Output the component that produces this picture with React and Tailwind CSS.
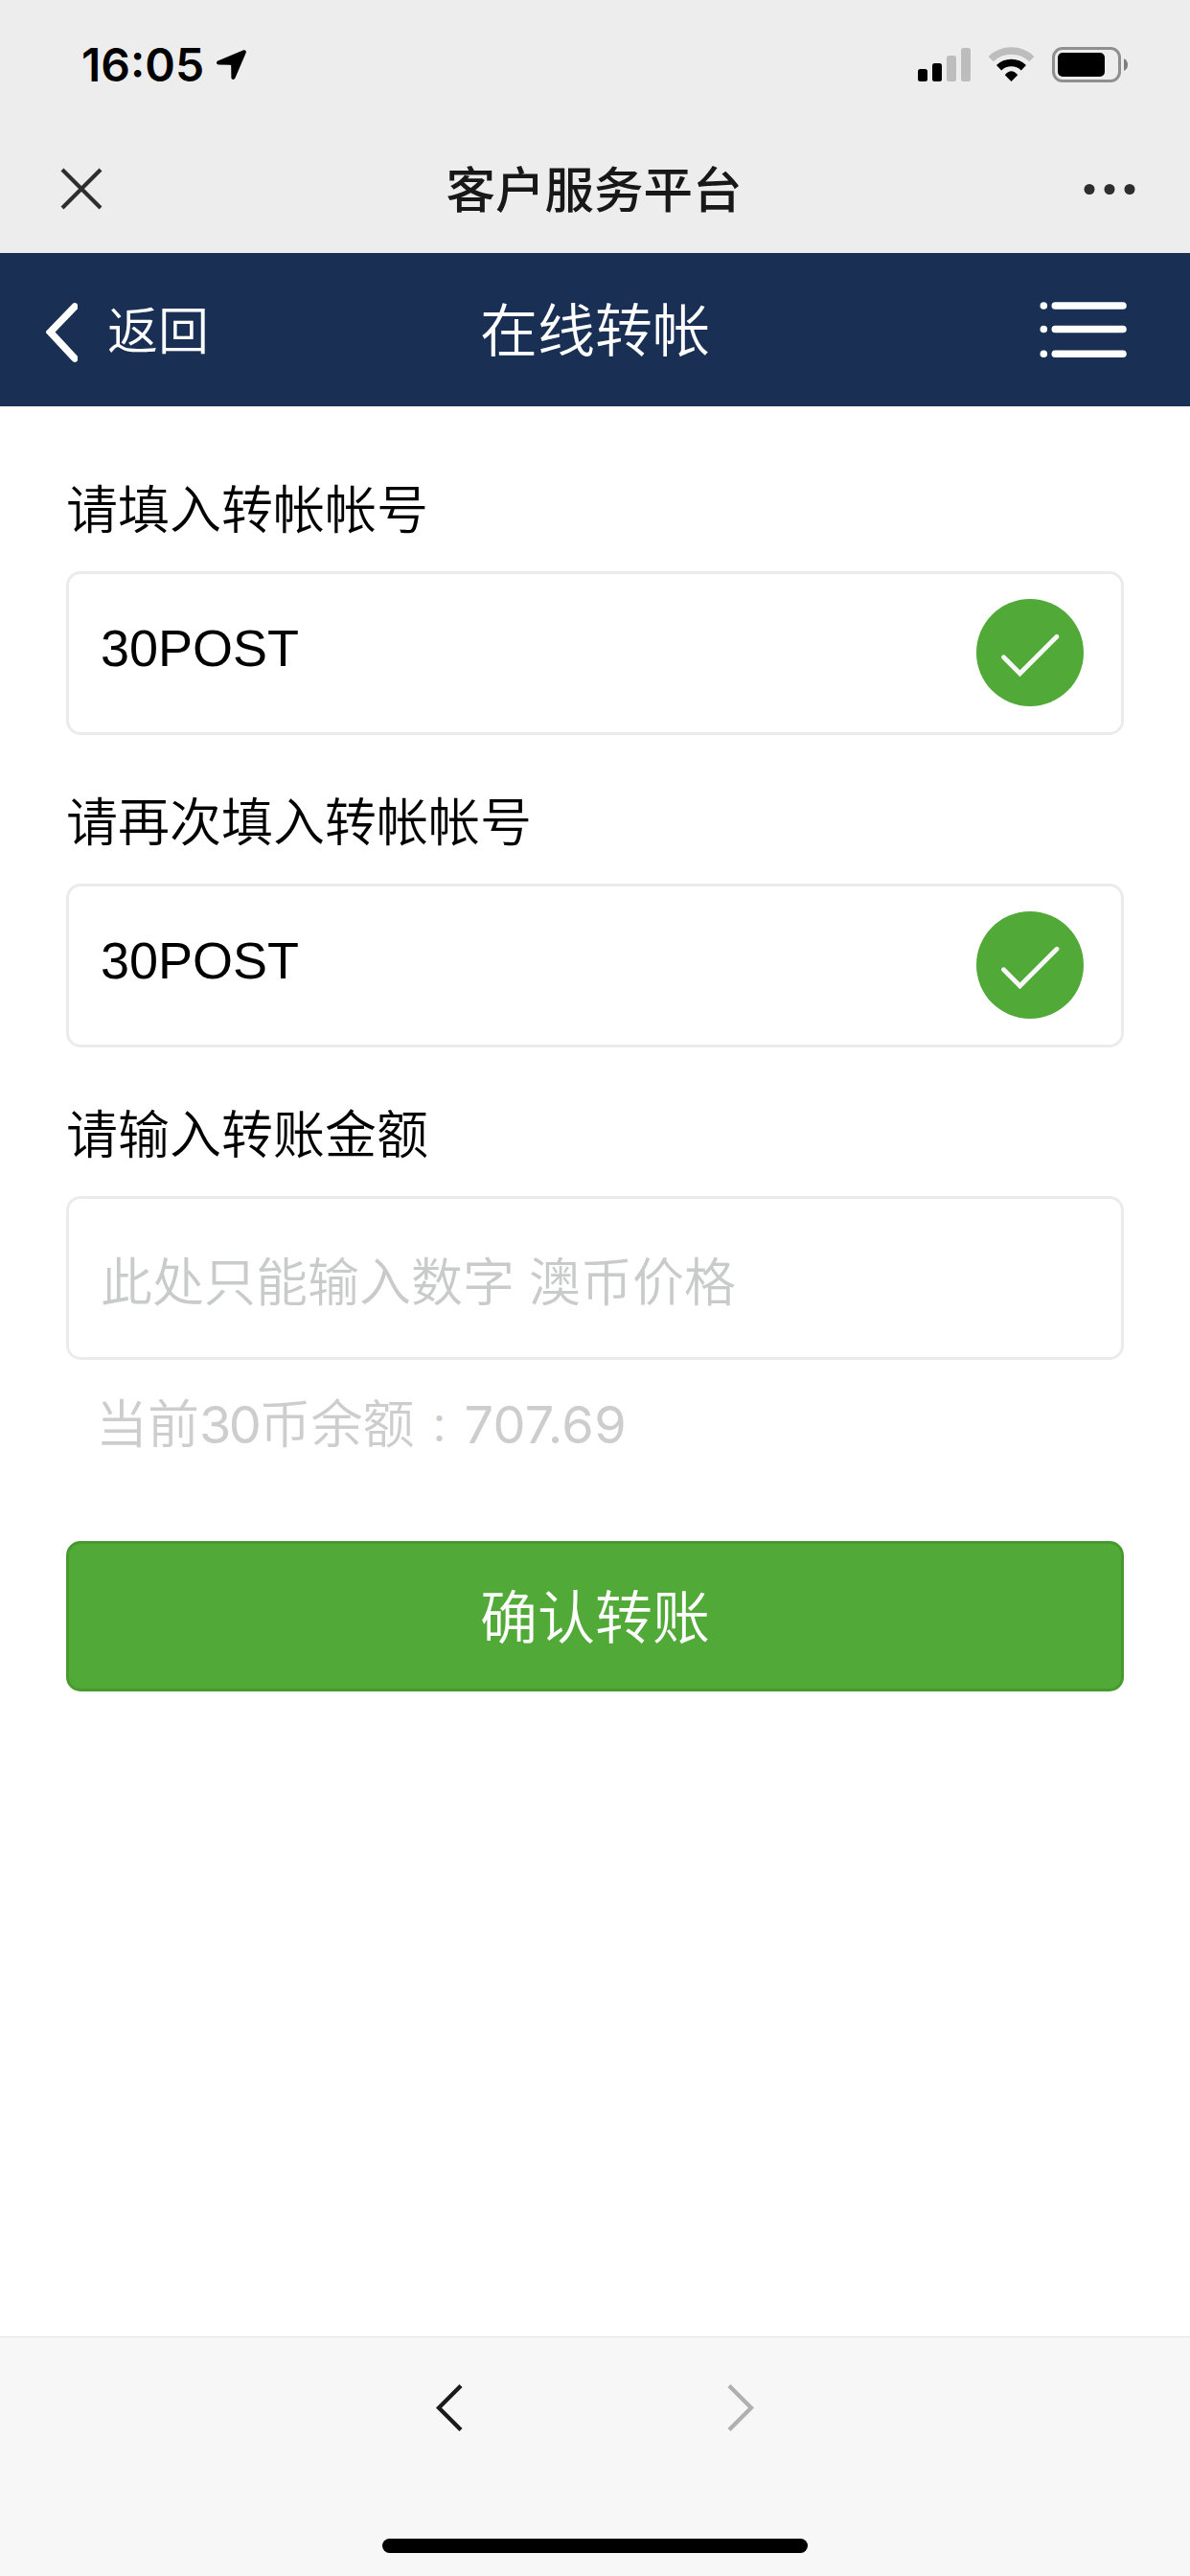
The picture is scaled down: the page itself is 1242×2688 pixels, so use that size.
import React from "react";
import { useState } from "react";

function StatusBar() {
  return (
    <div className="flex h-[132px] items-start justify-between pl-[85px] pr-[64px]">
      <div className="flex pt-[39px]">
        <span className="w-[141px] font-['Inter'] text-[48px] leading-[57px] font-semibold text-black">
          16:05
        </span>
        <svg className="mt-[13px] h-[31px] w-[31px]" viewBox="0 0 31 31">
          <path
            d="M28.2 .3 1.4 11.6C-.6 12.5-.2 15.4 2 15.5L14.2 15.8Q15.2 15.8 15.2 16.8L15.4 29C15.5 31.2 18.4 31.7 19.4 29.6L30.8 2.8C31.4 1.2 29.8-.3 28.2 .3Z"
            fill="#000"
          />
        </svg>
      </div>
      <div className="flex items-center pt-[49px]">
        <svg className="h-[37px] w-[56px]" viewBox="0 0 56 37">
          <rect x="0" y="23" width="10" height="13" rx="2.5" />
          <rect x="15" y="17" width="10" height="19" rx="2.5" />
          <rect x="30" y="9" width="10" height="27" rx="2.5" fill="#bdbdbd" />
          <rect x="45" y="1" width="10" height="35" rx="2.5" fill="#bdbdbd" />
        </svg>
        <svg
          className="ml-[17px] h-[37px] w-[49px]"
          viewBox="0 0 49 37"
          fill="none"
          strokeWidth="7.5"
        >
          <path d="M3.2 12.6A31 31 0 0 1 45.8 12.6" stroke="#bdbdbd" />
          <path d="M11.6 21.7A18.6 18.6 0 0 1 37.4 21.7" stroke="#000" />
          <path d="M24.5 36 17.8 29.2Q24.5 21.5 31.2 29.2Z" fill="#000" />
        </svg>
        <svg className="ml-[18px] h-[37px] w-[80px]" viewBox="0 0 80 37">
          <rect
            x="1.5"
            y="1.5"
            width="69"
            height="34"
            rx="9.5"
            fill="none"
            stroke="#8f8f8f"
            strokeWidth="3"
          />
          <rect x="6" y="6" width="49" height="25" rx="5" />
          <path d="M75 12Q79 14 79 18.5T75 25Z" fill="#7d7d7d" />
        </svg>
      </div>
    </div>
  );
}

function TitleBar() {
  return (
    <div className="grid h-[132px] grid-cols-[1fr_auto_1fr] items-center pr-[57px] pb-[2px] pl-[55px]">
      <svg
        className="ml-[7px] h-[44px] w-[66px]"
        viewBox="0 0 66 44"
        stroke="#2e2e2e"
        strokeWidth="4.2"
      >
        <path d="M3 2 43 42M43 2 3 42" />
      </svg>
      <h1 className="pb-[4px] text-[51.5px] leading-[60px] font-medium text-[#181818]">
        客户服务平台
      </h1>
      <svg
        className="h-[12px] w-[54px] justify-self-end"
        viewBox="0 0 54 12"
        fill="#2e2e2e"
      >
        <circle cx="6" cy="6.5" r="5.5" />
        <circle cx="27" cy="6.5" r="5.5" />
        <circle cx="48" cy="6.5" r="5.5" />
      </svg>
    </div>
  );
}

function Header() {
  return (
    <header className="grid h-[160px] grid-cols-3 items-center bg-[#193054] text-white">
      <button className="flex items-center pl-[48px]">
        <svg
          className="mt-[5px] h-[62px] w-[33px]"
          viewBox="0 0 33 62"
          fill="none"
          stroke="#fff"
          strokeWidth="7.5"
          strokeLinecap="round"
        >
          <path d="M30 4 4.5 30.5 30 58" />
        </svg>
        <span className="pb-[4px] pl-[31px] text-[53px] leading-[64px] font-[350]">
          返回
        </span>
      </button>
      <h2 className="pb-[7px] text-center text-[60px] leading-[70px] font-[350]">
        在线转帐
      </h2>
      <button className="flex justify-end pr-[65px]">
        <svg
          className="h-[60px] w-[93px]"
          viewBox="0 0 93 60"
          stroke="#fff"
          strokeWidth="7.6"
          strokeLinecap="round"
        >
          <path d="M5.3 5h.01M5.3 29.5h.01M5.3 55.2h.01" />
          <path d="M17.3 5h70.7M17.3 29.5h70.7M17.3 55.2h70.7" />
        </svg>
      </button>
    </header>
  );
}

function CheckMark() {
  return (
    <svg className="mb-[1px] h-[112px] w-[112px] shrink-0" viewBox="0 0 112 112">
      <circle cx="56" cy="56" r="56" fill="#51a937" />
      <path
        d="M28.5 60.8 45.5 77.8 84 39.2"
        fill="none"
        stroke="#f7f7f7"
        strokeWidth="4.8"
        strokeLinecap="round"
      />
    </svg>
  );
}

function Field({ label, value, onChange, placeholder, checked }) {
  return (
    <div className="mb-[55px]">
      <label className="block h-[100px] pt-[1px] text-[54px] leading-[64px] font-[350] text-black">
        {label}
      </label>
      <div className="flex h-[171px] items-center rounded-[15px] border-[3px] border-[#ebebeb] pr-[39px] pl-[33px]">
        <input
          className="h-[110px] min-w-0 flex-1 bg-transparent pb-[12px] font-['Liberation_Sans','Noto_Sans_CJK_SC',sans-serif] text-[54px] text-black outline-none placeholder-shown:pt-[10px] placeholder-shown:pb-0 placeholder:font-[350] placeholder:text-[#c9cbca]"
          type="text"
          value={value}
          placeholder={placeholder}
          onChange={(e) => onChange(e.target.value)}
        />
        {checked && <CheckMark />}
      </div>
    </div>
  );
}

function BottomBar() {
  return (
    <footer className="flex h-[250px] flex-col items-center justify-between border-t border-[#e2e2e2] bg-[#f7f7f7] pt-[48px] pb-[24px]">
      <div className="flex gap-[276px]">
        <svg
          className="h-[52px] w-[28px]"
          viewBox="0 0 28 52"
          fill="none"
          stroke="#1b1b1b"
          strokeWidth="4.4"
        >
          <path d="M26 2.5 3 25.5 26 48.5" />
        </svg>
        <svg
          className="h-[52px] w-[28px]"
          viewBox="0 0 28 52"
          fill="none"
          stroke="#b0b0b0"
          strokeWidth="4.4"
        >
          <path d="M2 2.5 25 25.5 2 48.5" />
        </svg>
      </div>
      <div className="h-[15px] w-[444px] rounded-full bg-black" />
    </footer>
  );
}

function App() {
  const [account, setAccount] = useState("30POST");
  const [confirmAccount, setConfirmAccount] = useState("30POST");
  const [amount, setAmount] = useState("");

  return (
    <div className="flex h-[2688px] w-[1242px] flex-col bg-white font-['Noto_Sans_CJK_SC',sans-serif]">
      <div className="bg-[#ededed]">
        <StatusBar />
        <TitleBar />
      </div>
      <Header />
      <main className="flex-1 px-[69px] pt-[72px]">
        <Field
          label="请填入转帐帐号"
          value={account}
          onChange={setAccount}
          checked={account !== ""}
        />
        <Field
          label="请再次填入转帐帐号"
          value={confirmAccount}
          onChange={setConfirmAccount}
          checked={confirmAccount === account}
        />
        <Field
          label="请输入转账金额"
          value={amount}
          onChange={setAmount}
          placeholder="此处只能输入数字 澳币价格"
        />
        <p className="-mt-[19px] h-[64px] pl-[31px] font-['Inter','Noto_Sans_CJK_SC',sans-serif] text-[54px] leading-[64px] font-[350] text-[#cdcdcd]">
          当前
          <span className="font-normal tracking-[-2.5px]">30</span>
          币余额
          <span className="px-[5px] font-['Noto_Sans_CJK_TC'] text-[42px] leading-none">
            ：
          </span>
          <span className="font-normal tracking-[0.3px]">707.69</span>
        </p>
        <button className="mt-[89px] h-[157px] w-full rounded-[15px] border-[3px] border-[#489a2f] bg-[#51a937] pb-[5px] text-[60px] leading-[70px] font-[350] text-white">
          确认转账
        </button>
      </main>
      <BottomBar />
    </div>
  );
}

export default App;
